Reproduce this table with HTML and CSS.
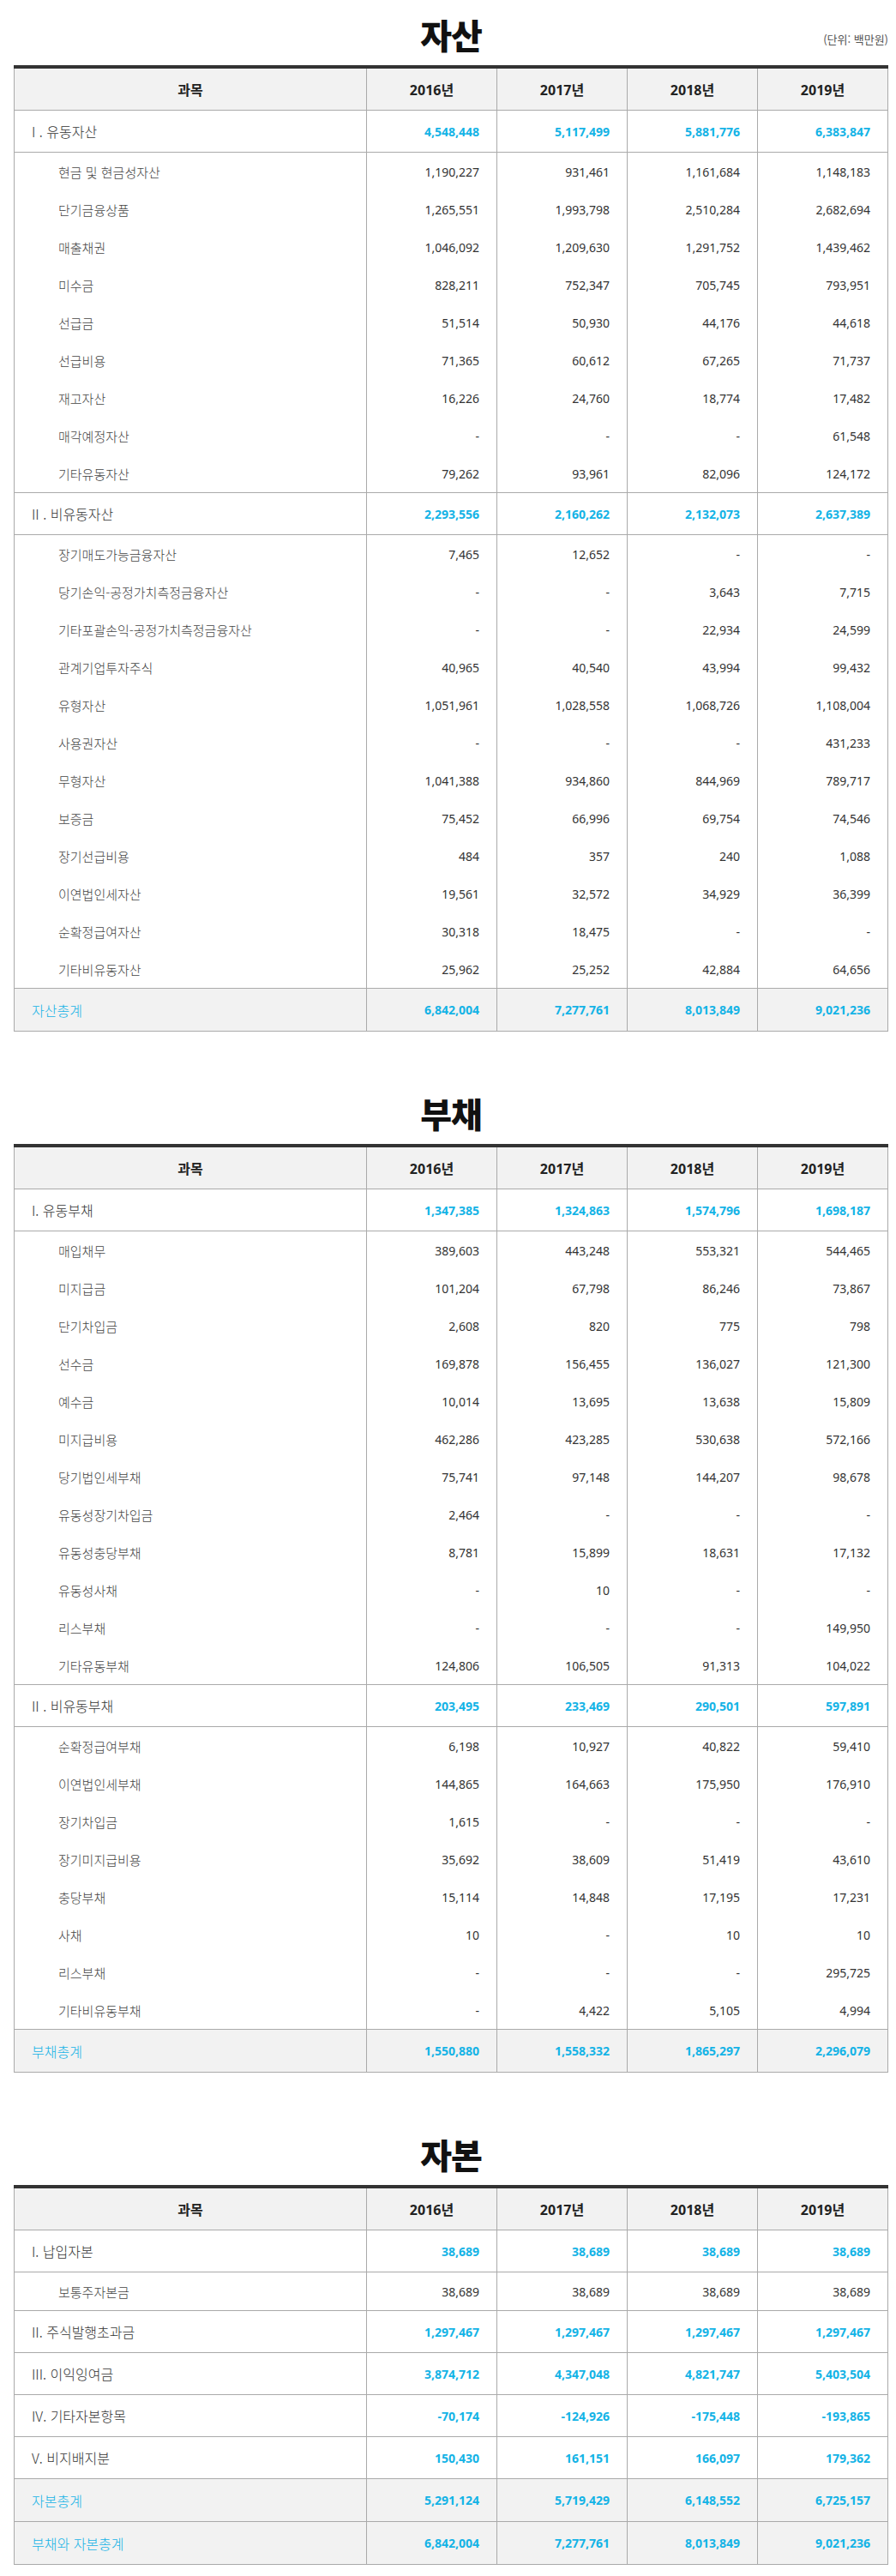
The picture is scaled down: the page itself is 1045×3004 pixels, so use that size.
FILE: index.html
```html
<!DOCTYPE html>
<html lang="ko">
<head>
<meta charset="utf-8">
<title>재무상태표</title>
<link rel="stylesheet" href="styles.css">
</head>
<body>
<div class="page">

<section class="section">
  <div class="sec-head">
    <span></span>
    <h2 class="sec-title">자산</h2>
    <span class="unit">(단위: 백만원)</span>
  </div>
  <table class="fin">
    <colgroup><col class="c-name"><col class="c-year"><col class="c-year"><col class="c-year"><col class="c-last"></colgroup>
    <thead>
      <tr><th>과목</th><th>2016년</th><th>2017년</th><th>2018년</th><th>2019년</th></tr>
    </thead>
    <tbody>
      <tr class="main"><td>I . 유동자산</td><td>4,548,448</td><td>5,117,499</td><td>5,881,776</td><td>6,383,847</td></tr>
      <tr class="sub"><td>현금 및 현금성자산</td><td>1,190,227</td><td>931,461</td><td>1,161,684</td><td>1,148,183</td></tr>
      <tr class="sub"><td>단기금융상품</td><td>1,265,551</td><td>1,993,798</td><td>2,510,284</td><td>2,682,694</td></tr>
      <tr class="sub"><td>매출채권</td><td>1,046,092</td><td>1,209,630</td><td>1,291,752</td><td>1,439,462</td></tr>
      <tr class="sub"><td>미수금</td><td>828,211</td><td>752,347</td><td>705,745</td><td>793,951</td></tr>
      <tr class="sub"><td>선급금</td><td>51,514</td><td>50,930</td><td>44,176</td><td>44,618</td></tr>
      <tr class="sub"><td>선급비용</td><td>71,365</td><td>60,612</td><td>67,265</td><td>71,737</td></tr>
      <tr class="sub"><td>재고자산</td><td>16,226</td><td>24,760</td><td>18,774</td><td>17,482</td></tr>
      <tr class="sub"><td>매각예정자산</td><td>-</td><td>-</td><td>-</td><td>61,548</td></tr>
      <tr class="sub last"><td>기타유동자산</td><td>79,262</td><td>93,961</td><td>82,096</td><td>124,172</td></tr>
      <tr class="main"><td>II . 비유동자산</td><td>2,293,556</td><td>2,160,262</td><td>2,132,073</td><td>2,637,389</td></tr>
      <tr class="sub"><td>장기매도가능금융자산</td><td>7,465</td><td>12,652</td><td>-</td><td>-</td></tr>
      <tr class="sub"><td>당기손익-공정가치측정금융자산</td><td>-</td><td>-</td><td>3,643</td><td>7,715</td></tr>
      <tr class="sub"><td>기타포괄손익-공정가치측정금융자산</td><td>-</td><td>-</td><td>22,934</td><td>24,599</td></tr>
      <tr class="sub"><td>관계기업투자주식</td><td>40,965</td><td>40,540</td><td>43,994</td><td>99,432</td></tr>
      <tr class="sub"><td>유형자산</td><td>1,051,961</td><td>1,028,558</td><td>1,068,726</td><td>1,108,004</td></tr>
      <tr class="sub"><td>사용권자산</td><td>-</td><td>-</td><td>-</td><td>431,233</td></tr>
      <tr class="sub"><td>무형자산</td><td>1,041,388</td><td>934,860</td><td>844,969</td><td>789,717</td></tr>
      <tr class="sub"><td>보증금</td><td>75,452</td><td>66,996</td><td>69,754</td><td>74,546</td></tr>
      <tr class="sub"><td>장기선급비용</td><td>484</td><td>357</td><td>240</td><td>1,088</td></tr>
      <tr class="sub"><td>이연법인세자산</td><td>19,561</td><td>32,572</td><td>34,929</td><td>36,399</td></tr>
      <tr class="sub"><td>순확정급여자산</td><td>30,318</td><td>18,475</td><td>-</td><td>-</td></tr>
      <tr class="sub last"><td>기타비유동자산</td><td>25,962</td><td>25,252</td><td>42,884</td><td>64,656</td></tr>
      <tr class="total"><td>자산총계</td><td>6,842,004</td><td>7,277,761</td><td>8,013,849</td><td>9,021,236</td></tr>
    </tbody>
  </table>
</section>

<section class="section">
  <div class="sec-head">
    <span></span>
    <h2 class="sec-title">부채</h2>
    <span></span>
  </div>
  <table class="fin">
    <colgroup><col class="c-name"><col class="c-year"><col class="c-year"><col class="c-year"><col class="c-last"></colgroup>
    <thead>
      <tr><th>과목</th><th>2016년</th><th>2017년</th><th>2018년</th><th>2019년</th></tr>
    </thead>
    <tbody>
      <tr class="main"><td>I. 유동부채</td><td>1,347,385</td><td>1,324,863</td><td>1,574,796</td><td>1,698,187</td></tr>
      <tr class="sub"><td>매입채무</td><td>389,603</td><td>443,248</td><td>553,321</td><td>544,465</td></tr>
      <tr class="sub"><td>미지급금</td><td>101,204</td><td>67,798</td><td>86,246</td><td>73,867</td></tr>
      <tr class="sub"><td>단기차입금</td><td>2,608</td><td>820</td><td>775</td><td>798</td></tr>
      <tr class="sub"><td>선수금</td><td>169,878</td><td>156,455</td><td>136,027</td><td>121,300</td></tr>
      <tr class="sub"><td>예수금</td><td>10,014</td><td>13,695</td><td>13,638</td><td>15,809</td></tr>
      <tr class="sub"><td>미지급비용</td><td>462,286</td><td>423,285</td><td>530,638</td><td>572,166</td></tr>
      <tr class="sub"><td>당기법인세부채</td><td>75,741</td><td>97,148</td><td>144,207</td><td>98,678</td></tr>
      <tr class="sub"><td>유동성장기차입금</td><td>2,464</td><td>-</td><td>-</td><td>-</td></tr>
      <tr class="sub"><td>유동성충당부채</td><td>8,781</td><td>15,899</td><td>18,631</td><td>17,132</td></tr>
      <tr class="sub"><td>유동성사채</td><td>-</td><td>10</td><td>-</td><td>-</td></tr>
      <tr class="sub"><td>리스부채</td><td>-</td><td>-</td><td>-</td><td>149,950</td></tr>
      <tr class="sub last"><td>기타유동부채</td><td>124,806</td><td>106,505</td><td>91,313</td><td>104,022</td></tr>
      <tr class="main"><td>II . 비유동부채</td><td>203,495</td><td>233,469</td><td>290,501</td><td>597,891</td></tr>
      <tr class="sub"><td>순확정급여부채</td><td>6,198</td><td>10,927</td><td>40,822</td><td>59,410</td></tr>
      <tr class="sub"><td>이연법인세부채</td><td>144,865</td><td>164,663</td><td>175,950</td><td>176,910</td></tr>
      <tr class="sub"><td>장기차입금</td><td>1,615</td><td>-</td><td>-</td><td>-</td></tr>
      <tr class="sub"><td>장기미지급비용</td><td>35,692</td><td>38,609</td><td>51,419</td><td>43,610</td></tr>
      <tr class="sub"><td>충당부채</td><td>15,114</td><td>14,848</td><td>17,195</td><td>17,231</td></tr>
      <tr class="sub"><td>사채</td><td>10</td><td>-</td><td>10</td><td>10</td></tr>
      <tr class="sub"><td>리스부채</td><td>-</td><td>-</td><td>-</td><td>295,725</td></tr>
      <tr class="sub last"><td>기타비유동부채</td><td>-</td><td>4,422</td><td>5,105</td><td>4,994</td></tr>
      <tr class="total"><td>부채총계</td><td>1,550,880</td><td>1,558,332</td><td>1,865,297</td><td>2,296,079</td></tr>
    </tbody>
  </table>
</section>

<section class="section">
  <div class="sec-head">
    <span></span>
    <h2 class="sec-title">자본</h2>
    <span></span>
  </div>
  <table class="fin">
    <colgroup><col class="c-name"><col class="c-year"><col class="c-year"><col class="c-year"><col class="c-last"></colgroup>
    <thead>
      <tr><th>과목</th><th>2016년</th><th>2017년</th><th>2018년</th><th>2019년</th></tr>
    </thead>
    <tbody>
      <tr class="main"><td>I. 납입자본</td><td>38,689</td><td>38,689</td><td>38,689</td><td>38,689</td></tr>
      <tr class="sub last"><td>보통주자본금</td><td>38,689</td><td>38,689</td><td>38,689</td><td>38,689</td></tr>
      <tr class="main"><td>II. 주식발행초과금</td><td>1,297,467</td><td>1,297,467</td><td>1,297,467</td><td>1,297,467</td></tr>
      <tr class="main"><td>III. 이익잉여금</td><td>3,874,712</td><td>4,347,048</td><td>4,821,747</td><td>5,403,504</td></tr>
      <tr class="main"><td>IV. 기타자본항목</td><td>-70,174</td><td>-124,926</td><td>-175,448</td><td>-193,865</td></tr>
      <tr class="main"><td>V. 비지배지분</td><td>150,430</td><td>161,151</td><td>166,097</td><td>179,362</td></tr>
      <tr class="total"><td>자본총계</td><td>5,291,124</td><td>5,719,429</td><td>6,148,552</td><td>6,725,157</td></tr>
      <tr class="total"><td>부채와 자본총계</td><td>6,842,004</td><td>7,277,761</td><td>8,013,849</td><td>9,021,236</td></tr>
    </tbody>
  </table>
</section>

</div>
</body>
</html>
```

FILE: styles.css
```css
html, body {
  margin: 0;
  padding: 0;
  background: #fff;
}

body {
  font-family: "Noto Sans", "Noto Sans CJK KR", sans-serif;
  color: #333;
}

.page {
  padding-left: 16px;
  width: 1020px;
}

.section + .section {
  margin-top: 55px;
}

.sec-head {
  display: grid;
  grid-template-columns: 1fr auto 1fr;
  align-items: center;
  padding-top: 16px;
  height: 48px;
  margin-bottom: 12px;
}

.sec-title {
  margin: 0;
  font-family: "Noto Sans CJK KR", sans-serif;
  font-size: 40px;
  font-weight: 900;
  line-height: 48px;
  color: #111;
  letter-spacing: -1px;
}

.unit {
  justify-self: end;
  margin-top: 10px;
  font-family: "Noto Sans CJK KR", sans-serif;
  font-size: 13px;
  color: #555;
}

.fin {
  width: 1020px;
  table-layout: fixed;
  border-collapse: separate;
  border-spacing: 0;
  border-top: 4px solid #333;
}

.c-name { width: 411px; }
.c-year { width: 152px; }
.c-last { width: 153px; }

.fin th,
.fin td {
  border-left: 1px solid #aaa;
  padding: 0 20px 0 0;
  white-space: nowrap;
}

.fin th:last-child,
.fin td:last-child {
  border-right: 1px solid #aaa;
}

.fin th {
  height: 48px;
  background: #f2f2f2;
  border-bottom: 1px solid #aaa;
  font-size: 16px;
  font-weight: 700;
  color: #222;
  text-align: center;
  padding: 0;
}

.fin td {
  text-align: right;
  font-size: 14px;
  color: #333;
}

.fin td:first-child {
  text-align: left;
  font-family: "Noto Sans CJK KR", sans-serif;
  font-size: 16px;
  font-weight: 300;
  color: #333;
  padding: 0 0 0 20px;
}

.main td {
  height: 48px;
  border-bottom: 1px solid #aaa;
}

.main td:not(:first-child),
.total td:not(:first-child) {
  color: #14b3e6;
  font-weight: 700;
}

.sub td {
  height: 44px;
}

.sub td:first-child {
  padding-left: 51px;
  font-size: 15px;
  color: #444;
}

.sub.last td {
  height: 44px;
  border-bottom: 1px solid #aaa;
}

.total td {
  height: 49px;
  background: #f2f2f2;
  border-bottom: 1px solid #aaa;
}

.total td:first-child {
  color: #14b3e6;
}
```
